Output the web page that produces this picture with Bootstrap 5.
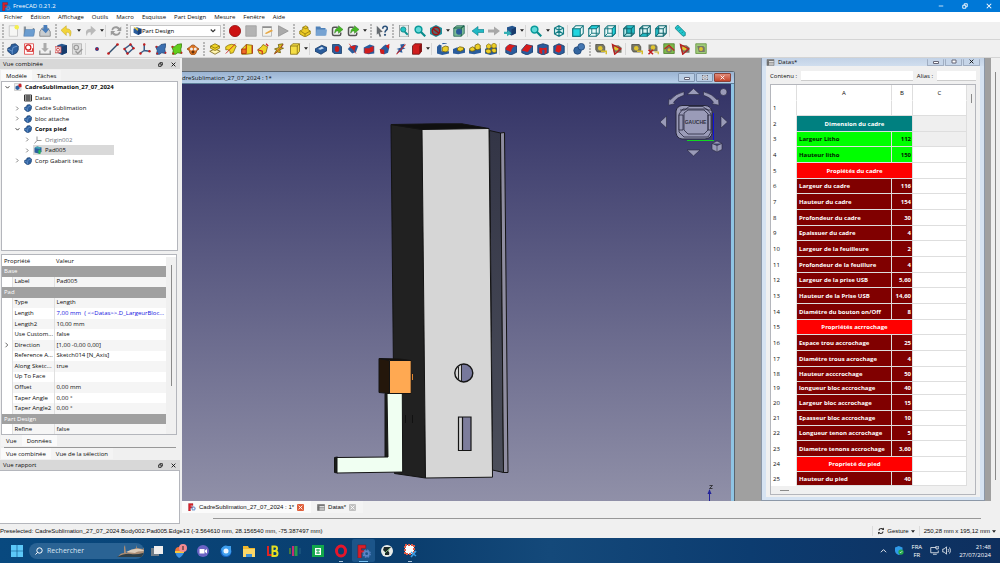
<!DOCTYPE html>
<html lang="fr">
<head>
<meta charset="utf-8">
<meta name="viewport" content="width=device-width, initial-scale=1">
<title>FreeCAD 0.21.2</title>
<link href="https://cdn.jsdelivr.net/npm/bootstrap@5.3.0/dist/css/bootstrap.min.css" rel="stylesheet">
<style>
  :root { --face:#f0f0f0; --line:#b4b6bc; --mdi:#a0a0a0; }
  body { font-family:"Open Sans","Noto Sans",sans-serif; font-size:6px; line-height:10px; color:#0c0c0c; background:var(--face); min-height:100vh; }
  button { border:0; background:none; padding:0; color:inherit; font:inherit; }
  a { color:inherit; text-decoration:none; }
  svg { display:block; flex:none; }
  .titlebar { background:#0078d7; color:#fff; height:12px; gap:2px; padding-left:2px; }
  .titlebar .winbtn { width:22px; }
  .menubar { background:#fff; height:10px; gap:8px; padding-left:4px; }
  .toolbar { height:18px; border-bottom:1px solid #d4d4d4; }
  .tb { width:16px; height:16px; display:flex; align-items:center; justify-content:center; }
  .tb svg { width:12px; height:12px; }
  .caret { width:7px; height:16px; display:flex; align-items:center; justify-content:center; }
  .caret svg { width:4px; height:3px; }
  .toolbar.second .caret { width:6px; }
  .vsep { width:3px; height:12px; border-left:1px solid #d6d6d6; }
  .toolbar.second .vsep { width:4px; }
  .grip { width:6px; height:14px; background:radial-gradient(circle at 2px 1px,#b8b8b8 1px,transparent 1px) 1px 0/6px 3px; }
  .toolbar > :first-child > .grip:first-child { width:5px; }
  .wbselect { width:91px; height:12px; border:1px solid #c6c6c6; background:#fff; padding:0 4px 0 2px; }
  .wbselect select { appearance:none; border:0; background:transparent; font:inherit; line-height:10px; padding:0; outline:0; }
  .dock { width:180px; flex:none; }
  .dock-title { background:#d8d8d8; height:10px; padding:0 4px 0 3px; }
  .dock-title svg { width:5px; height:5px; }
  .flat-tabs { padding-left:1px; }
  .flat-tabs .tabbtn { height:11px; padding:0 5px; background:#f4f4f4; }
  .flat-tabs .tabbtn.on { background:#fafafa; }
  .tree { border:1px solid var(--line); background:#fff; height:170px; margin:0 2px 0 1px; }
  .tree ul { display:grid; grid-auto-rows:1fr; height:84px; }
  .node { display:flex; align-items:center; gap:3px; height:100%; }
  .node .tw { width:7px; height:7px; padding:1px; margin-left:2px; }
  .node .ic { width:8px; height:8px; }
  .lv1 { padding-left:10px; } .lv2 { padding-left:20px; }
  .node .pick { display:flex; align-items:center; gap:3px; }
  .node .pick.on { background:#d9d9d9; width:81px; height:10px; margin-left:-1px; padding-left:1px; }
  .props { border:1px solid var(--line); background:#fff; margin:3px 3px 0 1px; height:181px; overflow:hidden; padding-top:2px; }
  .props table { width:164px; height:178px; table-layout:fixed; border-collapse:collapse; line-height:9px; }
  .props td, .props th { padding:0 0 0 2px; font-weight:400; white-space:nowrap; overflow:hidden; text-overflow:ellipsis; }
  .props .group th { background:#a0a0a0; color:#fff; }
  .props .odd { background:#f5f5f5; }
  .props td { border-left:1px solid #e0e0e0; }
  .props tr > :first-child { border-left:0; }
  .props .gut { background:#fff; }
  .props .linked { color:#1010e0; }
  .vscroll { flex:1; background:var(--face); display:flex; justify-content:center; }
  .vscroll i { width:1px; background:#8a8a8a; }
  .report { border:1px solid var(--line); border-left:0; background:#fff; }
  .mdi { background:var(--mdi); }
  .view3d { background:#8fc4e4; border:solid #5a646e; border-width:1px 1px 0 0; border-radius:0 3px 0 0; margin-top:13px; }
  .view3d .cap { height:12px; background:linear-gradient(#9ab3d1,#b8d0ea); border-bottom:1px solid #5d7f99; padding-right:3px; }
  .capbtn { width:17px; height:9px; border:1px solid #8095b0; border-radius:1px; background:#b9cde4; display:flex; align-items:center; justify-content:center; }
  .capbtn.stop { background:linear-gradient(#e08a78,#c4452c); border-color:#8b4238; }
  .canvas3d { background:linear-gradient(#333366,#9090a8); margin-right:3px; min-height:0; }
  .canvas3d .scene { width:100%; height:100%; }
  .navcube { top:0; right:0; width:76px; height:76px; }
  .axes { bottom:0; right:12px; width:24px; height:16px; }
  .sheetwin { width:224px; flex:none; background:#d6e3f2; border:1px solid #8c98a8; border-top:0; margin:0 6px 0 26px; padding:0 4px 3px 4px; }
  .sheetwin .cap { height:8px; background:linear-gradient(#c2d2e6,#d0deee); margin:0 -4px; padding:0 4px; }
  .sheetwin .capbtn { height:7px; width:17px; border-top:0; background:#c6d5e8; border-color:#a0aec2; }
  .sheetbody { background:var(--face); padding:5px 4px 2px 4px; }
  .sheetbody input { border:0; border-bottom:1px solid #ccc; background:#fff; height:10px; padding:0; font:inherit; min-width:0; }
  .alias { width:39px; }
  .grid-frame { border:1px solid var(--line); background:#fff; margin-top:3px; }
  .cells { width:196px; table-layout:fixed; border-collapse:separate; border-spacing:0; line-height:10px; }
  .cells th, .cells td { padding:0 2px; border-right:1px solid #dedede; border-bottom:1px solid #dedede; white-space:nowrap; overflow:hidden; }
  .cells th { font-weight:400; border-bottom-color:#fff; }
  .cells thead th { height:16px; text-align:center; }
  .cells tbody tr { height:16px; }
  .cells tbody tr:nth-child(1) { height:15px; }
  .cells tbody tr:nth-child(3n), .cells tbody tr:nth-child(22) { height:15px; }
  .cells tbody tr:nth-child(19) { height:13px; }
  .cells tbody tr:nth-child(25) { height:14px; }
  .cells td.num { text-align:right; padding:0 1px; }
  .cells .teal { background:#008080; color:#fff; } .cells .lime { background:#00ff00; color:#001800; }
  .cells .red { background:#ff0000; color:#fff; } .cells .maroon { background:#800000; color:#fff; }
  .cells .teal,.cells .lime,.cells .red,.cells .maroon { font-weight:700; }
  .cells .band { text-align:center; }
  .cells .pale { background:#efefef; }
  .vscroll.thumb { align-items:flex-start; padding-top:9px; } .vscroll.thumb i { height:9px; }
  .hscroll { background:var(--face); padding-left:9px; min-height:7px; } .hscroll i { width:9px; height:1px; background:#8a8a8a; }
  .outer { flex:none; width:9px; padding:14px 0 44px; }
  .mditab { height:12px; padding:0 7px 0 6px; gap:3px; background:#f4f4f4; font-family:"Liberation Sans",sans-serif; }
  .mditab.on { background:#fbfbfb; }
  .xbtn { width:7px; height:7px; background:#c0c0c0; border-radius:1px; display:flex; align-items:center; justify-content:center; }
  .xbtn.hot { background:#e0603c; }
  .hbar { height:1px; background:#989898; }
  .hbar.wide { margin:5px 10px 5px 31px; }
  .statusbar { height:14px; font-family:"Liberation Sans",sans-serif; }
  .statusbar .cell { border-left:1px solid #dcdcdc; padding:0 4px; gap:2px; }
  .taskbar { height:25px; background:linear-gradient(90deg,#08497f,#0a3d6d 40%,#14497a 55%,#0c3c70 75%,#0e2f5e); color:#fff; font-size:7px; }
  .search { background:#2a6394; border-radius:8px; height:16px; width:115px; margin:0 1px 0 6px; padding:0 0 0 6px; overflow:hidden; }
  .search input { border:0; background:transparent; color:#d8e6f2; font:inherit; width:70px; height:14px; padding:0; }
  .search input::placeholder { color:#d8e6f2; opacity:1; }
  .tk { width:23px; height:23px; display:flex; align-items:center; justify-content:center; position:relative; }
  .tk svg { width:14px; height:14px; }
  .tk.live { background:#1c5589; border-radius:2px; }
  .tk.run::after { content:""; position:absolute; bottom:0; left:10px; width:4px; height:1px; background:#a9c4dc; }
  .tk.live::after { left:7px; width:9px; background:#7cc4f4; }
  .tray { gap:8px; padding-right:9px; } .small-line { font-size:6px; line-height:8px; }
  .mt-1px { margin-top:1px; } .gap-1px { gap:1px; } .gap-3px { gap:3px; } .ms-2px { margin-left:2px; } .ms-11px { margin-left:11px; }
</style>
</head>
<body class="d-flex flex-column overflow-hidden">

<svg width="0" height="0" class="position-absolute" aria-hidden="true">
  <defs>
    <symbol id="new" viewBox="0 0 16 16"><path d="M3 1h11v14H3z" fill="#f6f6f4" stroke="#bbb"/><circle cx="13" cy="3" r="3" fill="#f4ee50"/></symbol>
    <symbol id="open" viewBox="0 0 16 16"><path d="M1 14V2h5l1 2h8v10z" fill="#8a9299"/><path d="M4 1h9v6H4z" fill="#e8e8e8"/><path d="M1 15 3 6h13l-2 9z" fill="#6b9dd0" stroke="#4f7fb2" stroke-width=".7"/></symbol>
    <symbol id="save" viewBox="0 0 16 16"><path d="M1 9 4 4h8l3 5v6H1z" fill="#c9cdd0" stroke="#777"/><path d="M6 0h5v5h3l-5 6-6-6h3z" fill="#4a7ebb"/></symbol>
    <symbol id="undo" viewBox="0 0 16 16"><path d="M7 1v4c6 0 8 4 5 10 0-4-2-6-5-5v4L0 7z" fill="#f2d43a" stroke="#c6a419" stroke-width=".7"/></symbol>
    <symbol id="redo" viewBox="0 0 16 16"><path d="M9 1v4C3 5 1 9 4 15c0-4 2-6 5-5v4l7-7z" fill="#b9b9b9"/></symbol>
    <symbol id="refresh" viewBox="0 0 16 16"><path d="M2 7c0-6 8-7 11-3l2-2v6H9l2-2C8 3 5 4 4 7zM14 9c0 6-8 7-11 3l-2 2V8h6l-2 2c3 3 6 2 7-1z" fill="#9b9b9b"/></symbol>
    <symbol id="wb" viewBox="0 0 16 16"><path d="m1 5 6-3 8 3v8l-6 3-8-4z" fill="#2a5c9c"/><path d="m8 8 7-3v8l-6 3z" fill="#173e75"/><path d="m0 1 8 8 1-4z" fill="#eec52c"/></symbol>
    <symbol id="rec" viewBox="0 0 16 16"><circle cx="8" cy="8" r="7.5" fill="#cc1212" stroke="#8e0909"/></symbol>
    <symbol id="stop" viewBox="0 0 16 16"><path d="M1 1h14v14H1z" fill="#b3b3b3" stroke="#9e9e9e"/></symbol>
    <symbol id="edit" viewBox="0 0 16 16"><path d="M2 2h12v13H2z" fill="#f3f3ee" stroke="#aaa"/><path d="M2 2h12v2H2z" fill="#8f8f8f"/><path d="m5 11 9-5 2 2-9 4z" fill="#e7a744"/></symbol>
    <symbol id="play" viewBox="0 0 16 16"><path d="m2 1 13 7-13 7z" fill="#aaa" stroke="#909090"/></symbol>
    <symbol id="group" viewBox="0 0 16 16"><path d="m1 8 4-2V3l4-2 3 2v3l3 2v4l-7 4-7-4z" fill="#edcb25" stroke="#87700b"/><path d="m2 8 6 4 7-4M8 12v3M5 3l4 2 3-2" fill="none" stroke="#87700b"/></symbol>
    <symbol id="folder" viewBox="0 0 16 16"><path d="M1 14V2h6l1 2h6v10z" fill="#4f81b8"/><path d="M2 6h14l-1 8H1z" fill="#77a3d2"/></symbol>
    <symbol id="link" viewBox="0 0 16 16"><path d="M9 3H4Q2 3 2 5v7q0 2 2 2h7q2 0 2-2v-2" fill="none" stroke="#555" stroke-width="2"/><path d="M5 11c0-5 2-7 5-7V1l6 5-6 5V8c-2 0-4 0-5 3z" fill="#46b825" stroke="#227510" stroke-width=".6"/></symbol>
    <symbol id="what" viewBox="0 0 16 16"><path d="m1 1 8 8-4 1 2 5-2 1-2-5-2 2z" fill="#666b70"/><path d="M9 5c0-5 7-4 6 0 0 2-3 2-3 5" fill="none" stroke="#2c527b" stroke-width="2.2"/><circle cx="12" cy="13" r="1.5" fill="#2c527b"/></symbol>
    <symbol id="fit" viewBox="0 0 16 16"><path d="M2 0h12v16H2z" fill="#e9eeee" stroke="#828888"/><circle cx="7" cy="6" r="3.5" fill="#22c3c3" stroke="#0b7a7a"/><path d="m9 9 4 4" stroke="#0b9090" stroke-width="2.4"/></symbol>
    <symbol id="mag" viewBox="0 0 16 16"><circle cx="6" cy="6" r="4.5" fill="#5fd8d8" stroke="#0a9a9a" stroke-width="2"/><path d="m9 9 6 6" stroke="#0a8b8b" stroke-width="3"/></symbol>
    <symbol id="nodraw" viewBox="0 0 16 16"><path d="m8 0 8 4v8l-8 4-8-4V4z" fill="#1e8f9c"/><circle cx="8" cy="8" r="5" fill="#57666a" stroke="#a01414" stroke-width="2"/><path d="m4 5 8 6" stroke="#a01414" stroke-width="2"/></symbol>
    <symbol id="bbox" viewBox="0 0 16 16"><path d="M1 4 5 1h10v10l-4 4H1z" fill="#79b994" stroke="#185b50"/><path d="M1 4h10v11M11 4l4-3" fill="none" stroke="#16604a" stroke-width="1.4"/><circle cx="8" cy="9" r="4" fill="#2b5b9a"/></symbol>
    <symbol id="left" viewBox="0 0 16 16"><path d="M8 2v4h8v4H8v4L0 8z" fill="#22b8c4" stroke="#0b7d88" stroke-width=".8"/></symbol>
    <symbol id="right" viewBox="0 0 16 16"><path d="M8 2v4H0v4h8v4l8-6z" fill="#a8a8a8"/></symbol>
    <symbol id="goto" viewBox="0 0 16 16"><path d="m4 3 7-2 5 2v8l-6 3-6-3z" fill="#24558f"/><path d="m10 6 6-3v8l-6 3z" fill="#183c6c"/><path d="M0 9h5l-1-3 6 5-6 4v-3H0z" fill="#35b0b4"/></symbol>
    <symbol id="cubeo" viewBox="0 0 16 16"><path d="m8 1 6 3v8l-6 3-6-3V4z" fill="#d8f2f2"/><path d="m8 1 6 3v8l-6 3-6-3V4zM2 4l6 3 6-3M8 7v8M8 1v6M2 12l6-4 6 4" fill="none" stroke="#147c84" stroke-width="1.5"/></symbol>
    <symbol id="front" viewBox="0 0 16 16"><path d="m1 5 4-4h10v10l-4 4H1z" fill="#eafafa" stroke="#11737b" stroke-width="1.4"/><path d="M1 5h10v10H1z" fill="#23d5df" stroke="#11737b" stroke-width="1.4"/><path d="m11 5 4-4" stroke="#11737b" stroke-width="1.4"/></symbol>
    <symbol id="top" viewBox="0 0 16 16"><path d="m1 5 4-4h10v10l-4 4H1z" fill="#eafafa" stroke="#11737b" stroke-width="1.4"/><path d="m1 5 4-4h10l-4 4z" fill="#23d5df" stroke="#11737b" stroke-width="1.4"/><path d="M11 5v10M5 5v6h9M5 11l-4 4" fill="none" stroke="#11737b" stroke-width="1.2"/></symbol>
    <symbol id="side" viewBox="0 0 16 16"><path d="m1 5 4-4h10v10l-4 4H1z" fill="#eafafa" stroke="#11737b" stroke-width="1.4"/><path d="m11 5 4-4v10l-4 4z" fill="#23d5df" stroke="#11737b" stroke-width="1.4"/><path d="M1 5h10M5 2v9h6M5 11l-4 4" fill="none" stroke="#11737b" stroke-width="1.2"/></symbol>
    <symbol id="rear" viewBox="0 0 16 16"><path d="m1 5 4-4h10v10l-4 4H1z" fill="#ace9e9" stroke="#0d646c" stroke-width="1.5"/><path d="M5 1h10v10H5z" fill="#22b6c0"/><path d="M1 5h10v10M11 5l4-4M5 2v9h9M5 11l-4 4" fill="none" stroke="#0d646c" stroke-width="1.4"/></symbol>
    <symbol id="bottom" viewBox="0 0 16 16"><path d="m1 5 4-4h10v10l-4 4H1z" fill="#dff6f6" stroke="#0d646c" stroke-width="1.5"/><path d="m1 15 4-4h10l-4 4z" fill="#22b6c0"/><path d="M1 5h10v10M11 5l4-4M5 2v9h9M5 11l-4 4" fill="none" stroke="#0d646c" stroke-width="1.4"/></symbol>
    <symbol id="lside" viewBox="0 0 16 16"><path d="m1 5 4-4h10v10l-4 4H1z" fill="#dff6f6" stroke="#0d646c" stroke-width="1.5"/><path d="m1 5 4-4v10l-4 4z" fill="#22b6c0"/><path d="M1 5h10v10M11 5l4-4M5 2v9h9M5 11l-4 4" fill="none" stroke="#0d646c" stroke-width="1.4"/></symbol>
    <symbol id="measure" viewBox="0 0 16 16"><path d="m2 3 3-3 10 10v4l-3 1L2 5z" fill="#23c7ce" stroke="#0d777d"/><path d="m4 5 2-2M7 8l2-2M10 11l2-2" stroke="#0d777d"/></symbol>
    <symbol id="body" viewBox="0 0 16 16"><path d="m1 7 4-2 1-3 5-1 4 3v5l-2 4-6 3-6-5z" fill="#2d609f" stroke="#12335f"/><path d="m1 8 6 3 1-5 6-2M7 11v4" fill="none" stroke="#7fa7d8"/></symbol>
    <symbol id="sketch" viewBox="0 0 16 16"><path d="M2 1h12v14H2z" fill="#fff" stroke="#d33"/><circle cx="7" cy="6" r="3.5" fill="none" stroke="#cf1d1d" stroke-width="1.6"/><path d="M5 11h8V7" fill="none" stroke="#cf1d1d" stroke-width="1.6"/></symbol>
    <symbol id="attach" viewBox="0 0 16 16"><path d="M6 0h4v7h3l-5 5-5-5h3z" fill="#aaa"/><path d="M1 10v5h14v-5" fill="none" stroke="#999" stroke-width="2"/></symbol>
    <symbol id="mapsk" viewBox="0 0 16 16"><path d="m3 3 6-2 7 2v10l-7 3-6-3z" fill="#285990"/><path d="m9 5 7-2v10l-7 3z" fill="#173c6d"/><path d="M0 5h8v8H0z" fill="#f4eaea" stroke="#c33"/><circle cx="4" cy="9" r="2" fill="none" stroke="#c22"/></symbol>
    <symbol id="valid" viewBox="0 0 16 16"><path d="M2 1h12v14H2z" fill="#ddd" stroke="#aaa"/><circle cx="7" cy="6" r="3" fill="none" stroke="#999" stroke-width="1.5"/><path d="m6 11 3 3 6-6" fill="none" stroke="#999" stroke-width="2"/></symbol>
    <symbol id="point" viewBox="0 0 16 16"><circle cx="8" cy="8" r="2.2" fill="#a81836" stroke="#304f98"/></symbol>
    <symbol id="linei" viewBox="0 0 16 16"><path d="M2 14 14 2" stroke="#304f6e" stroke-width="2"/><circle cx="2" cy="14" r="1.8" fill="#c51e1e"/><circle cx="14" cy="2" r="1.8" fill="#c51e1e"/></symbol>
    <symbol id="plane" viewBox="0 0 16 16"><path d="m10 2 4 5-8 7-4-6z" fill="none" stroke="#3a5d88" stroke-width="2"/><g fill="#c51e1e"><circle cx="10" cy="2" r="1.6"/><circle cx="14" cy="7" r="1.6"/><circle cx="6" cy="14" r="1.6"/><circle cx="2" cy="8" r="1.6"/></g></symbol>
    <symbol id="lcs" viewBox="0 0 16 16"><path d="M7 1v9l7 1M7 10l-6 4" fill="none" stroke="#3a5d88" stroke-width="2"/><g fill="#c51e1e"><circle cx="7" cy="2" r="1.6"/><circle cx="14" cy="11" r="1.6"/><circle cx="2" cy="14" r="1.6"/></g></symbol>
    <symbol id="blob" viewBox="0 0 16 16"><path d="m1 5 4 0 3-3 6-1v4l-1 3 1 6-5-1-3 2H2l1-5z" fill="#3b6fb0" stroke="#1f4678"/><g fill="#c51e1e"><circle cx="2" cy="5" r="1.3"/><circle cx="14" cy="13" r="1.3"/><circle cx="3" cy="14" r="1.3"/></g></symbol>
    <symbol id="blobg" viewBox="0 0 16 16"><path d="m1 5 4 0 3-3 6-1v4l-1 3 1 6-5-1-3 2H2l1-5z" fill="#62cf1c" stroke="#347a0a"/><g fill="#c51e1e"><circle cx="2" cy="5" r="1.3"/><circle cx="14" cy="13" r="1.3"/><circle cx="3" cy="14" r="1.3"/></g></symbol>
    <symbol id="clone" viewBox="0 0 16 16"><path d="M3 6q5-7 10 0l3 2-3 2q-1 6-5 6t-5-6L0 8z" fill="#dd7420" stroke="#8c3f08"/><circle cx="6" cy="8" r="2" fill="#eee"/><circle cx="11" cy="8" r="2" fill="#eee"/><circle cx="8" cy="12" r="2" fill="#67320a"/></symbol>
    <symbol id="pad" viewBox="0 0 16 16"><path d="m1 11 7-3 7 3-7 4z" fill="#fff5b0" stroke="#6f5a08"/><path d="m2 4 6-3 6 3v3l-6 3-6-3z" fill="#f0d427" stroke="#846b08"/><path d="m2 4 6 3 6-3" fill="none" stroke="#846b08"/></symbol>
    <symbol id="revol" viewBox="0 0 16 16"><path d="M1 5Q9-1 15 4l-4 9-4 1Q7 8 1 9z" fill="#f0d427" stroke="#846b08"/><path d="m1 14 13-13" stroke="#c22" stroke-width="1.2"/></symbol>
    <symbol id="loft" viewBox="0 0 16 16"><path d="m1 8 6-6 8 1v11l-8 1H1z" fill="#f0d427" stroke="#7a6406"/><path d="M1 8h6v6H1z" fill="#ee6f28" stroke="#a72108"/><path d="M7 2v6M15 3v11" stroke="#b42516" stroke-width="1.4"/></symbol>
    <symbol id="pipe" viewBox="0 0 16 16"><path d="m1 9 5-4 2-3 6 3-2 8-5 2-4-1z" fill="#f0d427" stroke="#7a6406"/><path d="m1 9 6 2v4M12 1l3 3" fill="none" stroke="#c22" stroke-width="1.5"/></symbol>
    <symbol id="helix" viewBox="0 0 16 16"><path d="m2 14 3-5-3-1 6-2-1-4 6-1-2 5 3 1-5 2 1 4-4-1z" fill="#d9bd20" stroke="#665407"/><path d="M2 15 14 2" stroke="#b22"/></symbol>
    <symbol id="prim" viewBox="0 0 16 16"><path d="m2 4 3-3h9v10l-3 4H2z" fill="#f5de45" stroke="#7c6608"/><path d="M2 4h9v11M11 4l3-3" fill="none" stroke="#7c6608"/></symbol>
    <symbol id="pocket" viewBox="0 0 16 16"><path d="m0 8 9-5 7 3v4l-8 5-8-4z" fill="#2a5c9c" stroke="#143763"/><path d="m4 8 5-3 3 2-5 2z" fill="#c7dcf2"/></symbol>
    <symbol id="hole" viewBox="0 0 16 16"><path d="M2 2h9l3 3v9H4l-2-2z" fill="#2a5c9c" stroke="#143763"/><ellipse cx="8" cy="8" rx="3" ry="4" fill="#c91c1c"/></symbol>
    <symbol id="groove" viewBox="0 0 16 16"><path d="M1 8Q8 0 15 4l-3 8-5 2z" fill="#2a5c9c"/><path d="m3 5 9-2-2 7z" fill="#d01d1d"/><path d="m3 1 9 13" stroke="#c22"/></symbol>
    <symbol id="loftr" viewBox="0 0 16 16"><path d="m1 6 8-4 6 2v10l-8 1-6-2z" fill="#2a5c9c"/><path d="M2 7h7v7H2zM9 6l5-2v7l-5 2z" fill="#d01d1d"/></symbol>
    <symbol id="piper" viewBox="0 0 16 16"><path d="m1 9 5-5 3-2 5 3-2 8-5 2-4-1z" fill="#2a5c9c"/><path d="m1 8 6 1v6l-5-1zM9 4l5-3-1 7z" fill="#d01d1d"/></symbol>
    <symbol id="helixr" viewBox="0 0 16 16"><path d="m2 14 3-5-3-1 6-2-1-4 6-1-2 5 3 1-5 2 1 4-4-1z" fill="#2a5c9c"/><path d="M2 15 14 2" stroke="#c22" stroke-width="1.4"/></symbol>
    <symbol id="primr" viewBox="0 0 16 16"><path d="m2 4 3-3h9v10l-3 4H2z" fill="#d01d1d" stroke="#5b0b0b"/><path d="m11 4 3-3v10l-3 4z" fill="#8d1212"/></symbol>
    <symbol id="mirror" viewBox="0 0 16 16"><path d="m0 5 3-3 3 1v8l10 0v3l-9 2-7-2z" fill="#2a5c9c"/><path d="m7 6 4-2 4 1v5l-3 2-5-1z" fill="#edcf27" stroke="#6e5b08"/><path d="m7 1 6-1" stroke="#2a5c9c" stroke-width="1.5"/></symbol>
    <symbol id="pattern" viewBox="0 0 16 16"><path d="m0 8 5-2 11 1v6l-9 2-7-1z" fill="#2a5c9c"/><path d="M6 7l3-2 5 1v3l-4 2-4-1z" fill="#edcf27" stroke="#6e5b08"/></symbol>
    <symbol id="pattern2" viewBox="0 0 16 16"><path d="m0 9 5-3 11 1v6l-9 2-7-1z" fill="#2a5c9c"/><path d="m1 7 4-2 3 2v3l-4 1-3-1zM8 3l4-2 3 2v5l-4 1-3-1z" fill="#edcf27" stroke="#6e5b08"/></symbol>
    <symbol id="pattern3" viewBox="0 0 16 16"><path d="m0 8 5-3 11 1v8l-9 2-7-2z" fill="#2a5c9c"/><path d="m2 3 3-2 3 2v3L5 8 2 6zM9 2l3-2 3 2v4l-3 1-3-1zM1 9l4-1 3 2v3l-4 1-3-2zM9 8l4-1 2 2v3l-3 1-3-2z" fill="#edcf27" stroke="#6e5b08" stroke-width=".8"/></symbol>
    <symbol id="fillet" viewBox="0 0 16 16"><path d="m1 6 5-4 10 2v8l-8 4-7-3z" fill="#2a5c9c" stroke="#143763"/><path d="M1 9q1-7 6-7l8 2q-6 0-7 8z" fill="#d81c1c"/></symbol>
    <symbol id="chamfer" viewBox="0 0 16 16"><path d="m1 9 6-7 9 2v8l-8 4-7-3z" fill="#2a5c9c" stroke="#143763"/><path d="m1 10 6-8 8 2-6 8z" fill="#d81c1c"/></symbol>
    <symbol id="draft" viewBox="0 0 16 16"><path d="m1 3 7-2 7 2v10l-7 3-7-3z" fill="#2a5c9c" stroke="#143763"/><path d="m3 6 5 1 5-1v7l-3 2V9H7v6l-4-2z" fill="#d81c1c"/></symbol>
    <symbol id="thick" viewBox="0 0 16 16"><path d="m1 4 7-3 7 3v9l-7 3-7-3z" fill="#2a5c9c" stroke="#143763"/><path d="M5 3h6v7l-3 3-5-2z" fill="#d81c1c"/></symbol>
    <symbol id="bool" viewBox="0 0 16 16"><circle cx="6" cy="10" r="5" fill="#33659f" stroke="#1b4273"/><circle cx="11" cy="5" r="4.5" fill="#4577b2" stroke="#1b4273"/></symbol>
    <symbol id="tape" viewBox="0 0 16 16"><path d="M1 2h10l2 3v7H3L1 9z" fill="#777768" stroke="#494940"/><circle cx="7" cy="7" r="3" fill="#dfc42e"/><path d="M8 11h7v4" fill="none" stroke="#d5bc2b" stroke-width="2"/></symbol>
    <symbol id="taper" viewBox="0 0 16 16"><path d="M1 3h9l4 3v7H4z" fill="#777768"/><circle cx="7" cy="7" r="3" fill="#dfc42e"/><path d="M2 2 13 8 5 15z" fill="none" stroke="#b81f1f" stroke-width="1.8"/></symbol>
    <symbol id="tapex" viewBox="0 0 16 16"><path d="M2 2h10l2 3v6H4L2 8z" fill="#777768"/><circle cx="8" cy="6" r="3" fill="#dfc42e"/><path d="m2 9 6 6M8 9l-6 6" stroke="#c21c1c" stroke-width="2"/><path d="M10 12h5v3" fill="none" stroke="#d5bc2b" stroke-width="1.6"/></symbol>
    <symbol id="tapeg" viewBox="0 0 16 16"><path d="M1 1h14v13H1z" fill="#7dba4b" stroke="#467825"/><circle cx="8" cy="9" r="4" fill="#777768"/><circle cx="8" cy="9" r="2" fill="#dfc42e"/><path d="m2 8 6-5 7 7" fill="none" stroke="#c02020" stroke-width="1.6"/></symbol>
    <symbol id="tapeg2" viewBox="0 0 16 16"><path d="M1 1h14v13H1z" fill="#9fca78" stroke="#5d8e3a"/><path d="M3 4h8l2 2v6H5z" fill="#777768"/><circle cx="8" cy="8" r="2.6" fill="#dfc42e"/></symbol>
    <symbol id="down" viewBox="0 0 8 5"><path d="M0 0h8L4 5z" fill="#222"/></symbol>
    <symbol id="chev" viewBox="0 0 8 8"><path d="m1 2 3 3 3-3" fill="none" stroke="#333" stroke-width="1.5"/></symbol>
    <symbol id="chevr" viewBox="0 0 8 8"><path d="m2 1 3 3-3 3" fill="none" stroke="#666" stroke-width="1.3"/></symbol>
    <symbol id="x" viewBox="0 0 8 8"><path d="m1 1 6 6M7 1 1 7" fill="none" stroke="currentColor" stroke-width="1.4"/></symbol>
    <symbol id="float" viewBox="0 0 8 8"><path d="M3 3V1h4v4H5M1 3h4v4H1z" fill="none" stroke="currentColor" stroke-width="1.2"/></symbol>
    <symbol id="min" viewBox="0 0 8 8"><path d="M1 4h6" stroke="currentColor" stroke-width="1"/></symbol>
    <symbol id="table" viewBox="0 0 16 14"><path d="M1 1h14v12H1zM1 5h14M1 9h14M6 1v12M10 1v12" fill="#fff" stroke="#222" stroke-width="1.8"/></symbol>
    <symbol id="sheet" viewBox="0 0 16 14"><path d="M1 1h14v12H1z" fill="#ddd" stroke="#666"/><path d="M1 1h4v12H1zM1 1h14v3H1z" fill="#777"/><path d="M1 7h14M1 10h14" stroke="#666"/></symbol>
    <symbol id="fc" viewBox="0 0 16 16"><path d="M1 1h9v4H5v2h4v3H5v6H1z" fill="#d8202a" stroke="#7d0d13" stroke-width=".5"/><circle cx="11" cy="11" r="2.6" fill="none" stroke="#5b86c8" stroke-width="2"/><circle cx="11" cy="11" r="4.2" fill="none" stroke="#5b86c8" stroke-width="1.2" stroke-dasharray="2 1.3"/></symbol>
    <symbol id="doc" viewBox="0 0 16 16"><path d="M1 1h13v14H1z" fill="#eee" stroke="#aaa"/><path d="m3 7 4-2 4 2v5l-4 2-4-2z" fill="#2d609f"/><path d="m8 4 4-3 3 2v5l-4 1z" fill="#c9212a"/></symbol>
    <symbol id="origin" viewBox="0 0 16 16"><path d="M6 1v8h9M6 9l-5 6" fill="none" stroke="#777" stroke-width="1.5"/></symbol>
    <symbol id="padg" viewBox="0 0 16 16"><path d="m1 4 5-3 9 2v9l-6 3-8-2z" fill="#2d609f"/><path d="m1 4 5-3 9 2-4 3z" fill="#41a6b5"/><path d="m11 7 4 4h-2v5H9v-5H7z" fill="#26b85a"/></symbol>
    <symbol id="gest" viewBox="0 0 16 16"><path d="M3 7C3 2 9 1 12 3l2-2v5H9l2-1C8 3 6 4 5 7zM13 9c0 5-6 6-9 4l-2 2v-5h5l-2 1c3 2 5 1 6-2z" fill="#333"/></symbol>
  </defs>
</svg>

<header>
  <div class="titlebar d-flex align-items-center">
    <svg width="9" height="9"><use href="#fc"/></svg>
    <span class="flex-fill">FreeCAD 0.21.2</span>
    <button class="winbtn" aria-label="Réduire"><svg width="6" height="6" class="mx-auto"><use href="#min"/></svg></button>
    <button class="winbtn" aria-label="Restaurer"><svg width="6" height="6" class="mx-auto"><use href="#float"/></svg></button>
    <button class="winbtn" aria-label="Fermer"><svg width="6" height="6" class="mx-auto"><use href="#x"/></svg></button>
  </div>
  <nav class="menubar d-flex align-items-center">
    <a href="#">Fichier</a><a href="#">Édition</a><a href="#">Affichage</a><a href="#">Outils</a><a href="#">Macro</a><a href="#">Esquisse</a><a href="#">Part Design</a><a href="#">Mesure</a><a href="#">Fenêtre</a><a href="#">Aide</a>
  </nav>
  <div class="toolbar d-flex align-items-center" role="toolbar" aria-label="Barre standard">
    <div class="d-flex align-items-center" data-tools="| new open save | undo v redo v , refresh |"></div>
    <div class="wbselect d-flex align-items-center">
      <svg width="9" height="9"><use href="#wb"/></svg>
      <select class="flex-fill" aria-label="Atelier"><option>Part Design</option></select>
      <svg width="6" height="6"><use href="#chev"/></svg>
    </div>
    <div class="d-flex align-items-center" data-tools="| rec stop edit play | group folder link link v | what | fit mag nodraw v bbox , left right goto v , mag v cubeo , front top side , rear bottom lside , measure"></div>
  </div>
  <div class="toolbar second d-flex align-items-center" role="toolbar" aria-label="Barre Part Design">
    <div class="d-flex align-items-center" data-tools="| body sketch attach mapsk valid , point linei plane lcs blob blobg clone | pad revol loft pipe helix prim v , pocket hole groove loftr piper helixr primr v , mirror pattern pattern2 pattern3 , fillet chamfer draft thick , bool | tape taper , tape tapex tapeg taper tapeg2"></div>
  </div>
</header>

<main class="d-flex flex-fill">
  <aside class="dock d-flex flex-column">
    <div class="dock-title d-flex align-items-center gap-2 mt-1px"><span class="flex-fill">Vue combinée</span><button aria-label="Détacher"><svg><use href="#float"/></svg></button><button aria-label="Fermer"><svg><use href="#x"/></svg></button></div>
    <div class="flat-tabs d-flex mt-1px"><button class="tabbtn on">Modèle</button><button class="tabbtn">Tâches</button></div>
    <div class="tree">
      <ul class="list-unstyled mb-0">
        <li class="node fw-bold"><svg class="tw"><use href="#chev"/></svg><svg class="ic"><use href="#doc"/></svg>CadreSublimation_27_07_2024</li>
        <li class="node lv1"><span class="tw"></span><svg class="ic"><use href="#table"/></svg>Datas</li>
        <li class="node lv1"><svg class="tw"><use href="#chevr"/></svg><svg class="ic"><use href="#body"/></svg>Cadte Sublimation</li>
        <li class="node lv1"><svg class="tw"><use href="#chevr"/></svg><svg class="ic"><use href="#body"/></svg>bloc attache</li>
        <li class="node lv1 fw-bold"><svg class="tw"><use href="#chev"/></svg><svg class="ic"><use href="#body"/></svg>Corps pied</li>
        <li class="node lv2 text-secondary"><svg class="tw"><use href="#chevr"/></svg><svg class="ic"><use href="#origin"/></svg>Origin002</li>
        <li class="node lv2"><svg class="tw"><use href="#chevr"/></svg><span class="pick on"><svg class="ic"><use href="#padg"/></svg>Pad005</span></li>
        <li class="node lv1"><svg class="tw"><use href="#chevr"/></svg><svg class="ic"><use href="#body"/></svg>Corp Gabarit test</li>
      </ul>
    </div>
    <div class="props d-flex">
      <table>
        <colgroup><col style="width:10px"><col style="width:42px"><col></colgroup>
        <thead><tr><th colspan="2">Propriété</th><th>Valeur</th></tr></thead>
        <tbody>
          <tr class="group"><th colspan="3">Base</th></tr>
          <tr class="odd"><td class="gut"></td><td>Label</td><td>Pad005</td></tr>
          <tr class="group"><th colspan="3">Pad</th></tr>
          <tr class="odd"><td class="gut"></td><td>Type</td><td>Length</td></tr>
          <tr><td class="gut"></td><td>Length</td><td class="linked">7,00 mm&nbsp; ( &lt;&lt;Datas&gt;&gt;.D_LargeurBloc...</td></tr>
          <tr class="odd"><td class="gut"></td><td>Length2</td><td>10,00 mm</td></tr>
          <tr><td class="gut"></td><td>Use Custom...</td><td>false</td></tr>
          <tr class="odd"><td class="gut"><svg width="6" height="6"><use href="#chevr"/></svg></td><td>Direction</td><td>[1,00 -0,00 0,00]</td></tr>
          <tr><td class="gut"></td><td>Reference A...</td><td>Sketch014 [N_Axis]</td></tr>
          <tr class="odd"><td class="gut"></td><td>Along Sketc...</td><td>true</td></tr>
          <tr><td class="gut"></td><td>Up To Face</td><td></td></tr>
          <tr class="odd"><td class="gut"></td><td>Offset</td><td>0,00 mm</td></tr>
          <tr><td class="gut"></td><td>Taper Angle</td><td>0,00 °</td></tr>
          <tr class="odd"><td class="gut"></td><td>Taper Angle2</td><td>0,00 °</td></tr>
          <tr class="group"><th colspan="3">Part Design</th></tr>
          <tr class="odd"><td class="gut"></td><td>Refine</td><td>false</td></tr>
        </tbody>
      </table>
      <div class="vscroll pt-2 pb-5"><i></i></div>
    </div>
    <div class="flat-tabs d-flex"><button class="tabbtn">Vue</button><button class="tabbtn on">Données</button></div>
    <div class="hbar mx-1 mt-1px"></div>
    <div class="flat-tabs d-flex"><button class="tabbtn on">Vue combinée</button><button class="tabbtn">Vue de la sélection</button></div>
    <div class="dock-title d-flex align-items-center gap-2 mt-1px"><span class="flex-fill">Vue rapport</span><button aria-label="Détacher"><svg><use href="#float"/></svg></button><button aria-label="Fermer"><svg><use href="#x"/></svg></button></div>
    <div class="report flex-fill"></div>
  </aside>

  <section class="d-flex flex-column flex-fill ms-2px">
    <div class="mdi d-flex flex-fill">
      <article class="view3d d-flex flex-column flex-fill">
        <div class="cap d-flex align-items-center">
          <span class="flex-fill">dreSublimation_27_07_2024 : 1*</span>
          <div class="d-flex gap-1px text-white">
            <button class="capbtn" aria-label="Réduire"><svg width="6" height="4" viewBox="0 0 6 4"><path d="M.5 1.500h5v2h-5z" fill="#fff" stroke="#667"/></svg></button>
            <button class="capbtn" aria-label="Agrandir"><svg width="6" height="5" viewBox="0 0 6 5"><path d="M1 1h4v3H1z" fill="none" stroke="#667" stroke-width="2"/><path d="M1 1h4v3H1z" fill="none" stroke="#fff"/></svg></button>
            <button class="capbtn stop" aria-label="Fermer"><svg width="5" height="5"><use href="#x"/></svg></button>
          </div>
        </div>
        <div class="canvas3d flex-fill position-relative">
          <svg class="scene position-absolute" viewBox="182 84 549 417" preserveAspectRatio="xMidYMid slice" role="img" aria-label="Vue 3D du pied">
            <g stroke="#141414" stroke-width="1" stroke-linejoin="round">
              <path d="M489.500 130.500 500.500 133 503.500 472.500 492.500 470z" fill="url(#panel)"/>
              <path d="m500.500 133 4-.5 3.500 340h-4.500z" fill="#8f8da0"/>
              <path d="m391 124.500 31.500 5L425.500 478l-31-4.500z" fill="#212121"/>
              <path d="m391 124.500 45-.7h26l27 4.700-67 1z" fill="#101010"/>
              <path d="m422 129.500 67-1 3.500 348.700-67 .8z" fill="#d6d6d6"/>
              <path d="M385 393.500h3v64h-3zM334.500 457.500l3-.5v16l-3-.5z" fill="#1a1d1a"/>
              <path d="M387 393.500h15.300l.4 78.500-65.700 1v-15.500l51-.5z" fill="#f0fff2"/>
              <path d="m379 358.500 21 .5 11 1.500-21.500.5z" fill="#1a1007"/>
              <path d="m379 358.500 10.500 2v33l-10.500-1z" fill="#24170b"/>
              <path d="M389.500 360.500h21.700v33h-21.700z" fill="#ffa952"/>
            </g>
            <path d="M412.500 374v6" stroke="#e08530"/>
            <path d="M405.500 415v8M412.500 415v8" stroke="#111"/>
            <circle cx="463.800" cy="373" r="9" fill="#77789c"/>
            <path d="M461.500 364.300a9 9 0 0 0 0 17.400z" fill="#d3d3d3"/>
            <path d="M458.500 367v12M461.500 365v16" stroke="#222"/>
            <circle cx="463.800" cy="373" r="9" fill="none" stroke="#151515" stroke-width="1.400"/>
            <path d="M458.500 417h12.500v33.500h-12.500z" fill="#7d7d9c"/>
            <path d="M459 417.500h3.500v32.500H459z" fill="#d3d3d3"/>
            <path d="M458.500 417h12.500v33.500h-12.500zM462.500 417v33" fill="none" stroke="#151515" stroke-width="1.200"/>
            <defs><linearGradient id="panel" x2="0" y2="1"><stop stop-color="#333546"/><stop offset="1" stop-color="#4b4e5a"/></linearGradient></defs>
          </svg>
          <svg class="navcube position-absolute" viewBox="655 84 76 76" role="img" aria-label="Cube de navigation">
            <g fill="#9a9bb8" stroke="#26263c" stroke-width=".6" stroke-linejoin="round">
              <path d="M687 94.500h13l-6.500-6zM687 150h13l-6.500 6zM666.500 116v12l-6.500-6zM721 116v12l6.500-6z"/>
              <circle cx="723.500" cy="92" r="3.500"/>
              <path d="M684 91.700v3.500q-7 2-10.500 7l1.500 1.500-6.500 1.500.5-6.500 1.500 1q5-6 13.500-8zM703.500 91.700v3.500q7 2 10 7l-1.500 1.500 7 1.500-.5-6.500-1.500 1q-5-6-13.500-8z"/>
              <path d="M676 111q1-5 6-5.500h23q6 .5 7 6v22q-1 5-7 5.500h-23q-5-.5-6-6z" stroke-width="1"/>
              <path d="M680 110h5l4-3.500h14l4 3.500h4M679 114v18l5 5h24l3-5v-18l-4-5h-24z" fill="none" stroke-width=".8"/>
              <path d="m684 113 4-3h16l4 4v16l-4 4h-16l-4-4zM679 115h4v15h-4zM708 115h3v15h-3z" stroke-width=".8"/>
              <path d="m712 143.500 5-2.500 5 2.500v6l-5 2.500-5-2.500zM712 143.500l5 2 5-2M717 145.500v6"/>
            </g>
            <path d="M713.500 113v27" stroke="#1010dc"/><path d="M687 140.500h27" stroke="#10d820"/>
            <text x="695.500" y="124" text-anchor="middle" font-family="Liberation Sans, sans-serif" font-size="5" font-weight="700" fill="#30303c">GAUCHE</text>
          </svg>
          <svg class="axes position-absolute" viewBox="0 0 24 16" role="img" aria-label="Axes">
            <path d="M14.500 5v11" stroke="#22229a"/><path d="m12.500 9 2-5 2 5z" fill="#22229a"/><path d="M14.500.5h3l-3 3h3" fill="none" stroke="#222" stroke-width=".8"/>
          </svg>
        </div>
      </article>
      <article class="sheetwin d-flex flex-column">
        <div class="cap d-flex align-items-center gap-1px">
          <svg width="9" height="7"><use href="#sheet"/></svg><span class="flex-fill ms-2px">Datas*</span>
          <button class="capbtn" aria-label="Réduire"><svg width="6" height="4" viewBox="0 0 6 4"><path d="M.5 1.500h5v2h-5z" fill="#fff" stroke="#667"/></svg></button>
          <button class="capbtn" aria-label="Agrandir"><svg width="6" height="5" viewBox="0 0 6 5"><path d="M1 1h4v3H1z" fill="#fff" stroke="#667"/></svg></button>
          <button class="capbtn" aria-label="Fermer"><svg width="5" height="5"><use href="#x"/></svg></button>
        </div>
        <div class="sheetbody d-flex flex-column flex-fill">
          <div class="d-flex align-items-center">
            <label for="contenu" class="me-1">Contenu :</label><input id="contenu" class="flex-fill me-1" type="text">
            <label for="alias" class="me-1">Alias :</label><input id="alias" type="text" size="6" class="alias">
          </div>
          <div class="grid-frame d-flex flex-column flex-fill">
            <div class="d-flex">
              <table class="cells">
                <colgroup><col style="width:26px"><col style="width:95px"><col style="width:21px"><col></colgroup>
                <thead><tr><th></th><th>A</th><th>B</th><th>C</th></tr></thead>
                <tbody id="rows"></tbody>
              </table>
              <div class="vscroll thumb"><i></i></div>
            </div>
            <div class="hscroll flex-fill d-flex align-items-center"><i></i></div>
          </div>
        </div>
      </article>
    </div>
    <div class="d-flex me-2">
      <div class="mditab on d-flex align-items-center"><svg width="8" height="8"><use href="#fc"/></svg><span>CadreSublimation_27_07_2024 : 1*</span><button class="xbtn hot text-white" aria-label="Fermer la vue"><svg width="5" height="5"><use href="#x"/></svg></button></div>
      <div class="mditab d-flex align-items-center"><svg width="8" height="7"><use href="#sheet"/></svg><span>Datas*</span><button class="xbtn text-white" aria-label="Fermer Datas"><svg width="5" height="5"><use href="#x"/></svg></button></div>
    </div>
    <div class="hbar wide"></div>
  </section>
  <div class="vscroll outer"><i></i></div>
</main>

<footer>
  <div class="statusbar d-flex align-items-center">
    <span class="flex-fill">Preselected: CadreSublimation_27_07_2024.Body002.Pad005.Edge13 (-3.564610 mm, 28.156540 mm, -75.387497 mm)</span>
    <button class="cell d-flex align-items-center"><svg width="8" height="8"><use href="#gest"/></svg>Gesture<svg width="4" height="3"><use href="#down"/></svg></button>
    <button class="cell d-flex align-items-center">250,28 mm x 195,12 mm<svg width="4" height="3"><use href="#down"/></svg></button>
  </div>
  <div class="taskbar d-flex align-items-center">
    <button class="ms-11px" aria-label="Démarrer"><svg width="12" height="12" viewBox="0 0 12 12"><path d="M0 0h5.700v5.700H0zM6.300 0H12v5.700H6.300zM0 6.300h5.700V12H0zM6.300 6.300H12V12H6.300z" fill="#5cc8f8"/></svg></button>
    <div class="search d-flex align-items-center">
      <svg width="8" height="8" viewBox="0 0 8 8" class="me-1"><circle cx="4.500" cy="3.500" r="2.700" fill="none" stroke="#fff"/><path d="M2.600 5.400.5 7.500" stroke="#fff"/></svg>
      <input type="search" placeholder="Rechercher" aria-label="Rechercher">
      <svg width="30" height="14" viewBox="0 0 30 14"><path d="M1 13q2-4 6-4V3l1-2 1 8 6-3 4-2V1l1 3 6 1V2l2 4v7z" fill="#a98c74"/><path d="M0 13q8-4 14-3t15-2l-4 5z" fill="#2d3f48"/><path d="M9 8q7-4 14-3l5 2q-8 0-10 2z" fill="#dccbb8"/></svg>
    </div>
    <button class="tk" aria-label="Vue des tâches"><svg viewBox="0 0 14 14"><path d="M1 4h8v8H1z" fill="#6f7b86"/><path d="M4 2h9v8H4z" fill="#eee"/></svg></button>
    <button class="tk" aria-label="Notifications"><svg viewBox="0 0 14 14"><path d="M2 8h9q-1 4-5 6-3-2-4-6z" fill="#3c91e4"/><path d="M2 8q0-5 4-5t5 5z" fill="#f0733a"/><path d="M2 7h9v2H2z" fill="#f6c53c"/><circle cx="10" cy="4" r="4" fill="#f48a92"/><path d="M10 2v4" stroke="#222"/></svg></button>
    <button class="tk" aria-label="Chat"><svg viewBox="0 0 14 14"><circle cx="7" cy="7" r="6" fill="#6b63c4"/><path d="M3.500 5h5v4.500h-5zM9 6.500 11 5v4.500L9 8z" fill="#fff"/></svg></button>
    <button class="tk" aria-label="Thunderbird"><svg viewBox="0 0 14 14"><circle cx="7" cy="7.500" r="5.500" fill="#1766c8"/><path d="M2 5Q5 0 9 2l3 0 0 4q1 4-4 6-5 0-5-4z" fill="#3f9fee"/><circle cx="7" cy="7" r="2.500" fill="#eef6ff"/></svg></button>
    <button class="tk" aria-label="Explorateur"><svg viewBox="0 0 14 14"><path d="M1 2h5l1 2h6v8H1z" fill="#f0b72c"/><path d="M1 5h12v8H1z" fill="#fbd768"/><path d="M4 10h6v3H4z" fill="#3c8ed8"/></svg></button>
    <button class="tk" aria-label="LibreBrowser"><svg viewBox="0 0 14 14"><path d="M3 2v9h4" fill="none" stroke="#e02424" stroke-width="2"/><path d="M7.500 2.500h2.500q2 0 2 2t-2 2.500q2.500 0 2.500 2.500T10 12H7.500zM7.500 7H10" fill="none" stroke="#e6df22" stroke-width="2"/></svg></button>
    <button class="tk" aria-label="Audio"><svg viewBox="0 0 14 14"><path d="M2 4v6" stroke="#4a7a3a" stroke-width="2"/><path d="M5 2v10" stroke="#c52a7a" stroke-width="2"/><path d="M8 2v10" stroke="#2c9a4a" stroke-width="3"/><path d="M12 4v6" stroke="#17507c" stroke-width="2"/></svg></button>
    <button class="tk" aria-label="Tableur"><svg viewBox="0 0 14 14"><path d="M1 1h12v12H1z" fill="#12a84c"/><path d="M4 4h6v7H4z" fill="#fff"/><path d="M5 6h4M5 9h4M7 5v5" stroke="#12a84c"/></svg></button>
    <button class="tk run" aria-label="Opera"><svg viewBox="0 0 14 14"><ellipse cx="7" cy="7" rx="4.500" ry="5" fill="none" stroke="#e5162b" stroke-width="3"/></svg></button>
    <button class="tk run live" aria-label="FreeCAD"><svg><use href="#fc"/></svg></button>
    <button class="tk" aria-label="Inkscape"><svg viewBox="0 0 14 14"><circle cx="7" cy="7" r="6" fill="#e9ece9"/><path d="M4 3h7L8 7q2 1 1 4H5V8L3 6z" fill="#1d2a2a"/><path d="m5 9 5-5" stroke="#7ab572" stroke-width="1"/></svg></button>
    <button class="tk run" aria-label="Capture"><svg viewBox="0 0 14 14"><path d="M2 1h9v9H2z" fill="#fff" stroke="#dc5a48" stroke-width="2" stroke-dasharray="2 1"/><path d="m8 8 5 4M8 13l5-6" stroke="#3b9ee4" stroke-width="1.600"/></svg></button>
    <div class="ms-auto d-flex align-items-center tray">
      <svg width="7" height="7" viewBox="0 0 8 8"><path d="m1 6 3-3 3 3" fill="none" stroke="#fff"/></svg>
      <svg width="9" height="9" viewBox="0 0 12 12"><path d="m5 0 5 2v4q0 4-5 6-5-2-5-6V2z" fill="#2f9ae8"/><circle cx="8" cy="8" r="3.500" fill="#23a84a"/><path d="m6.500 8 1 1 2-2" fill="none" stroke="#fff"/></svg>
      <div class="text-center small-line">FRA<br>FR</div>
      <div class="d-flex gap-3px">
        <svg width="9" height="9" viewBox="0 0 12 12"><path d="M8 2H1v7h10V6M4 11h5M8 0h3v4H8z" fill="none" stroke="#fff"/></svg>
        <svg width="9" height="9" viewBox="0 0 12 12"><path d="M1 4h2l3-3v10L3 8H1zM8 4q2 2 0 4M10 2q3 4 0 8" fill="none" stroke="#fff"/></svg>
      </div>
      <div class="text-end small-line">21:48<br>27/07/2024</div>
    </div>
  </div>
</footer>
<script>
  const icon = id => `<svg aria-hidden="true"><use href="#${id}"/></svg>`;
  document.querySelectorAll('[data-tools]').forEach(bar => {
    bar.innerHTML = bar.dataset.tools.split(' ').map(t =>
      t === '|' ? '<span class="grip"></span>' :
      t === ',' ? '<span class="vsep"></span>' :
      t === 'v' ? `<button class="caret" aria-label="Plus">${icon('down')}</button>` :
      `<button class="tb" aria-label="${t}">${icon(t)}</button>`).join('');
  });

  const data = [
    [], ['teal','Dimension du cadre'], ['lime','Largeur Litho','112'], ['lime','Hauteur litho','150'],
    ['red','Propiétés du cadre'], ['maroon','Largeur du cadre','116'], ['maroon','Hauteur du cadre','154'],
    ['maroon','Profondeur du cadre','30'], ['maroon','Epaissuer du cadre','4'], ['maroon','Largeur de la feuilleure','2'],
    ['maroon','Profondeur de la feuillure','4'], ['maroon','Largeur de la prise USB','5,60'], ['maroon','Hauteur de la Prise USB','14,60'],
    ['maroon','Diamétre du bouton on/Off','8'], ['red','Propriétés  acrrochage'], ['maroon','Espace trou accrochage','25'],
    ['maroon','Diamétre trous acrochage','4'], ['maroon','Hauteur acccrochage','50'], ['maroon','longueur bloc accrochage','40'],
    ['maroon','Largeur bloc accrochage','15'], ['maroon','Epasseur bloc accrochage','10'], ['maroon','Longueur tenon accrochage','5'],
    ['maroon','Diametre tenons accrochage','3,60'], ['red','Proprieté du pied'], ['maroon','Hauteur du pied','40']
  ];
  document.getElementById('rows').innerHTML = data.map(([tone, label, value], i) => {
    const pale = i === 1 || i === 2 ? ' class="pale"' : '';
    const cells = !tone ? '<td></td><td></td>' :
      value === undefined ? `<td colspan="2" class="band ${tone}">${label}</td>` :
      `<td class="${tone}">${label}</td><td class="num ${tone}">${value}</td>`;
    return `<tr><th>${i + 1}</th>${cells}<td${pale}></td></tr>`;
  }).join('');
</script>
<script src="https://cdn.jsdelivr.net/npm/bootstrap@5.3.0/dist/js/bootstrap.bundle.min.js"></script>
</body>
</html>
